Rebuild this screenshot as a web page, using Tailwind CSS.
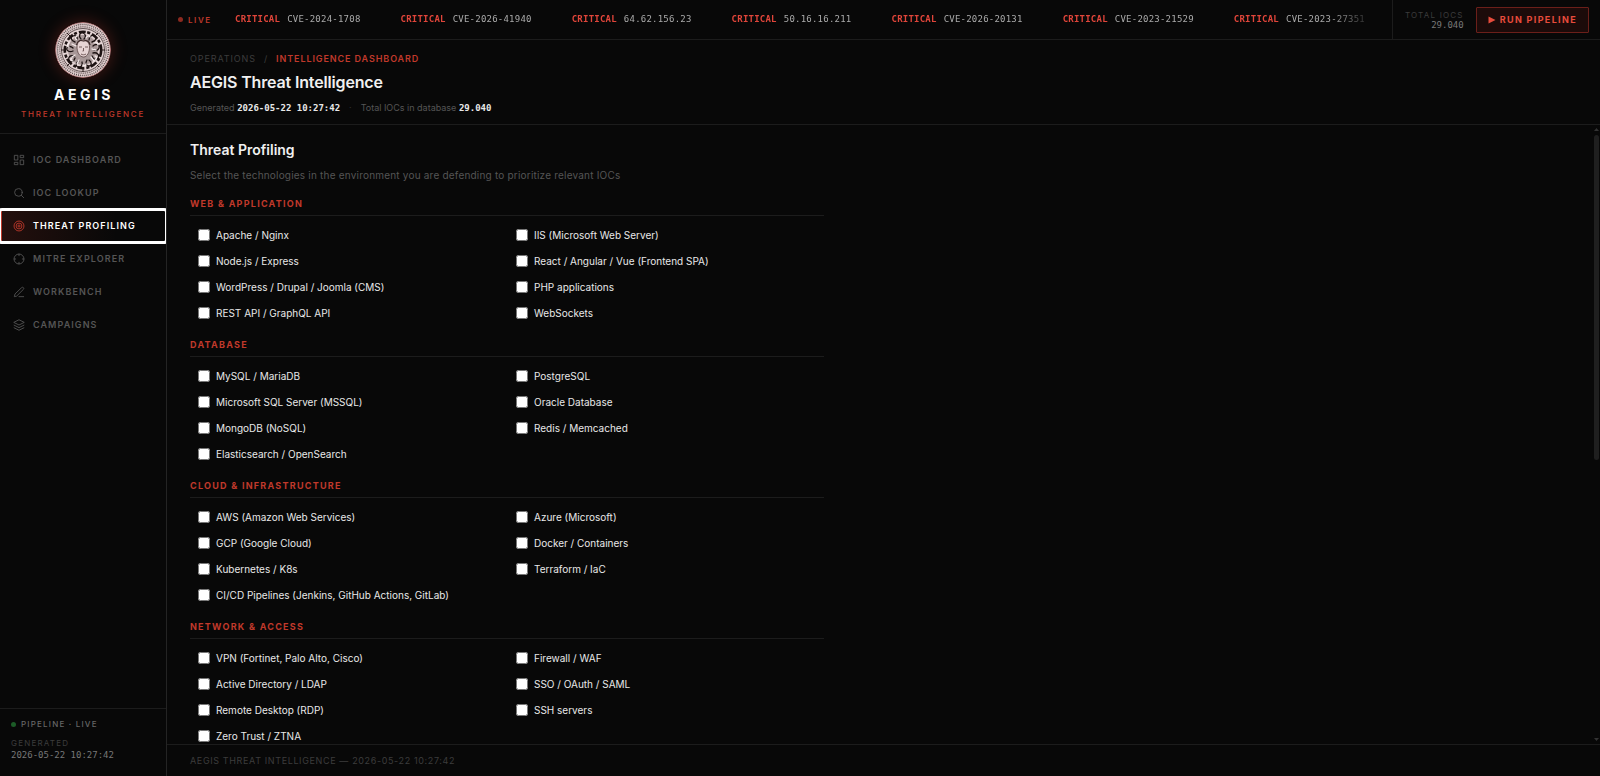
<!doctype html>
<html lang="en">
<head>
  <meta charset="UTF-8">
  <meta name="viewport" content="width=device-width, initial-scale=1.0">
  <title>AEGIS Threat Intelligence</title>
  <script src="https://cdn.jsdelivr.net/npm/@tailwindcss/browser@4"></script>
</head>
<body class="flex h-screen overflow-hidden bg-[#080808] font-['Inter',sans-serif] text-[#e8e8e8]">

<!-- Sidebar -->
<aside class="flex w-[167px] shrink-0 flex-col border-r border-[#242424]">
    <div class="flex flex-col items-center border-b border-[#1c1c1c] pt-[22px] pb-[13px]">
        <svg class="size-14 rounded-full shadow-[0_0_16px_1px_rgba(192,57,43,0.3)]" viewBox="0 0 56 56" fill="none" role="img" aria-label="Aegis shield">
            <circle cx="28" cy="28" r="27.5" fill="#e3d3d3" stroke="#a86a6a"/>
            <circle cx="28" cy="28" r="25.5" stroke="#5a4a4a" stroke-width="1.5" stroke-dasharray="1 1"/>
            <circle cx="28" cy="28" r="23.2" stroke="#8d7d7d" stroke-width="1.6" stroke-dasharray="1.5 .7"/>
            <circle cx="28" cy="28" r="21.5" stroke="#2b1e1e" stroke-width=".7"/>
            <circle cx="28" cy="28" r="18.2" stroke="#1c1212" stroke-width="2.6" stroke-dasharray="7 1.5 3 2"/>
            <circle cx="28" cy="28" r="15" fill="#a89898"/>
            <g stroke="#1c1212" stroke-width="1.3" stroke-linecap="round">
                <path d="M20 20c-4-1-5-5-2-6s5 1 4 4M26 17c-3-3-1-7 2-6s3 4 1 6M34 18c0-4 4-6 6-4s1 5-3 6M38 24c3-3 7-1 6 2s-4 3-6 1M38 31c4-1 7 2 5 5s-5 1-6-2M34 38c3 2 3 6 0 6s-4-3-2-6M27 40c1 3-1 6-4 5s-2-5 1-6M20 36c-1 4-5 5-6 2s1-5 5-4M18 29c-4 2-7-1-6-3s4-2 6 0"/>
            </g>
            <g stroke="#f4eaea" stroke-width="1.3" stroke-linecap="round">
                <path d="M22 18c-2-1-2-3 0-4M31 16c1-2 3-3 4-1M39 21c2-1 4 0 4 2M40 34c2 0 2 3 0 4M31 42c0 2-2 2-3 1M18 39c-2 0-3-2-1-3M14 25c-2 0-2-3 0-4M20 33l-3 2M36 35l3 4M21 24l-4-2M37 27l4 1M24 38l-2 4"/>
            </g>
            <path d="M22 25c0-5 3-7 6.500-7s6 3 6 7c0 5-2 10-6 10s-6.500-5-6.500-10z" fill="#e6d4d4" stroke="#5a4444" stroke-width=".8"/>
            <path d="M21.500 23c1-5 4-5 7-4 3-1 6 0 6.500 4" stroke="#3a2828" stroke-width="1.200"/>
            <path d="M24 25h3M30 25h3M28.500 26v3h-1M26 32c1.500 1 3.500 1 5 0" stroke="#6a5050" stroke-width=".9"/>
            <path d="M28 45v5M10 28h-4M46 28h4M14 42l-2 2M42 43l2 2M15 14l-3-3M41 13l2-2" stroke="#2b1e1e"/>
        </svg>
        <div class="mt-2 pl-[2px] text-[14px] leading-[18px] font-bold tracking-[0.25em] text-white">AEGIS</div>
        <div class="mt-1 text-[8px] leading-[12px] font-medium tracking-[0.22em] whitespace-nowrap text-[#c0392b]">THREAT INTELLIGENCE</div>
    </div>

    <nav class="flex flex-1 flex-col gap-px overflow-hidden pt-[10px] text-[9px] font-semibold tracking-[0.12em] text-[#555]">
        <a href="#dashboard" class="flex h-8 shrink-0 items-center gap-[7px] border-l-2 border-transparent px-[10px]">
            <svg class="size-[14px]" viewBox="0 0 24 24" fill="none" stroke="currentColor" stroke-width="1.500"><path d="M4 4h6v8H4zM14 4h6v4h-6zM14 12h6v8h-6zM4 16h6v4H4z"/></svg>
            IOC DASHBOARD
        </a>
        <a href="#lookup" class="flex h-8 shrink-0 items-center gap-[7px] border-l-2 border-transparent px-[10px]">
            <svg class="size-[14px]" viewBox="0 0 24 24" fill="none" stroke="currentColor" stroke-width="1.500" stroke-linecap="round"><circle cx="11" cy="11" r="6.500"/><path d="m20 20-4-4"/></svg>
            IOC LOOKUP
        </a>
        <a href="#profiling" aria-current="page" class="flex h-8 shrink-0 items-center gap-[7px] rounded-[2px] border-l-2 border-[#c0392b] bg-linear-to-r from-[#c0392b]/15 to-transparent to-70% px-[10px] text-white outline-3 -outline-offset-1 outline-white">
            <svg class="size-[14px] text-[#c0392b]" viewBox="0 0 24 24" fill="none" stroke="currentColor" stroke-width="1.500"><circle cx="12" cy="12" r="8.500"/><circle cx="12" cy="12" r="5"/><circle cx="12" cy="12" r="1.800"/></svg>
            THREAT PROFILING
        </a>
        <a href="#mitre" class="flex h-8 shrink-0 items-center gap-[7px] border-l-2 border-transparent px-[10px]">
            <svg class="size-[14px]" viewBox="0 0 24 24" fill="none" stroke="currentColor" stroke-width="1.500"><circle cx="12" cy="12" r="8.500"/><path d="M12 3v4M12 17v4M3 12h4M17 12h4"/></svg>
            MITRE EXPLORER
        </a>
        <a href="#workbench" class="flex h-8 shrink-0 items-center gap-[7px] border-l-2 border-transparent px-[10px]">
            <svg class="size-[14px]" viewBox="0 0 24 24" fill="none" stroke="currentColor" stroke-width="1.500" stroke-linecap="round" stroke-linejoin="round"><path d="M12 20h8M16.500 4.500a2 2 0 0 1 3 3L8 19l-4 1 1-4z"/></svg>
            WORKBENCH
        </a>
        <a href="#campaigns" class="flex h-8 shrink-0 items-center gap-[7px] border-l-2 border-transparent px-[10px]">
            <svg class="size-[14px]" viewBox="0 0 24 24" fill="none" stroke="currentColor" stroke-width="1.500" stroke-linejoin="round"><path d="M12 3 3 7.500l9 4.500 9-4.500zM3 16.500l9 4.500 9-4.500M3 12l9 4.500 9-4.500"/></svg>
            CAMPAIGNS
        </a>
    </nav>

    <div class="border-t border-[#1c1c1c] px-[11px] pt-[9px] pb-[15px]">
        <div class="flex items-center gap-[5px] text-[8px] leading-[12px] font-medium tracking-[0.15em] text-[#666]">
            <span class="size-[5px] rounded-full bg-[#1c5c27]"></span>PIPELINE · LIVE
        </div>
        <div class="mt-[7px] text-[8px] leading-[12px] tracking-[0.15em] text-[#3c3c3c]">GENERATED</div>
        <div class="font-['DejaVu_Sans_Mono',monospace] text-[9px] leading-[12px] text-[#777]">2026-05-22 10:27:42</div>
    </div>
</aside>

<div class="flex min-w-0 flex-1 flex-col">
    <!-- Live ticker -->
    <div class="flex h-10 shrink-0 items-center border-b border-[#1c1c1c]">
        <div class="flex w-[63px] shrink-0 items-center gap-[5px] pl-[11px] text-[8px] font-semibold tracking-[0.2em] text-[#c0392b]">
            <span class="size-[5px] rounded-full bg-[#8c2a20]"></span>LIVE
        </div>
        <div id="ticker" class="mr-4 flex min-w-0 flex-1 gap-10 overflow-hidden pl-[5px] font-['DejaVu_Sans_Mono',monospace] text-[9px] tracking-wide [mask-image:linear-gradient(to_right,black_96%,transparent)]"></div>
        <div class="flex h-full shrink-0 items-center gap-3 border-l border-[#1c1c1c] pr-[11px] pl-3">
            <div class="text-right">
                <div class="text-[8px] leading-[10px] tracking-[0.15em] text-[#3c3c3c]">TOTAL IOCS</div>
                <div class="font-['DejaVu_Sans_Mono',monospace] text-[9px] leading-[10px] text-[#777]">29.040</div>
            </div>
            <button type="button" class="flex h-[26px] items-center gap-1 rounded-[1px] border border-[#6b1f1a] bg-[#1c0b0a] px-[11px] text-[9px] font-bold tracking-[0.15em] text-[#e74c3c]">
                <svg class="size-[8px]" viewBox="0 0 8 8" fill="currentColor"><path d="M.5.5l7 3.500-7 3.500z"/></svg>RUN PIPELINE
            </button>
        </div>
    </div>

    <!-- Page header -->
    <header class="shrink-0 border-b border-[#1c1c1c] px-[23px] pt-3 pb-[9px]">
        <div class="flex gap-2 text-[9px] leading-[14px] tracking-[0.1em] text-[#3c3c3c]">
            <span>OPERATIONS</span><span>/</span><span class="font-semibold text-[#c0392b]">INTELLIGENCE DASHBOARD</span>
        </div>
        <h1 class="mt-[5px] text-[16px] leading-[22px] font-semibold tracking-[-0.01em] text-[#f0f0f0]">AEGIS Threat Intelligence</h1>
        <div class="mt-2 flex gap-[9px] text-[9px] leading-[14px] text-[#555]">
            <span>Generated <b class="font-['DejaVu_Sans_Mono',monospace] text-[#e8e8e8]">2026-05-22 10:27:42</b></span>
            <span class="text-[#333]">·</span>
            <span>Total IOCs in database <b class="font-['DejaVu_Sans_Mono',monospace] text-[#e8e8e8]">29.040</b></span>
        </div>
    </header>

    <!-- Threat profiling form -->
    <div class="relative flex min-h-0 flex-1 flex-col">
        <main class="min-h-0 flex-1 overflow-y-auto px-[23px] pt-[15px] [scrollbar-width:none]">
            <h2 class="text-[14px] leading-[20px] font-semibold text-[#f0f0f0]">Threat Profiling</h2>
            <p class="mt-[7px] text-[10px] leading-[16px] tracking-[0.02em] text-[#555]">Select the technologies in the environment you are defending to prioritize relevant IOCs</p>
            <form id="groups" class="mt-[14px] max-w-[634px]"></form>
        </main>
        <div class="absolute inset-y-0 right-0 flex w-[7px] flex-col items-center py-[3px]" aria-hidden="true">
            <svg class="h-[3px] w-[5px] shrink-0" viewBox="0 0 5 3" fill="#333"><path d="M0 3 2.500 0 5 3z"/></svg>
            <div class="mt-1 h-[53%] w-[5px] rounded-full bg-[#1f1f1f]"></div>
            <svg class="mt-auto h-[3px] w-[5px] shrink-0" viewBox="0 0 5 3" fill="#333"><path d="M0 0h5L2.500 3z"/></svg>
        </div>
    </div>

    <footer class="flex h-8 shrink-0 items-center border-t border-[#1c1c1c] px-[23px] text-[9px] tracking-[0.07em] text-[#3c3c3c]">
        AEGIS THREAT INTELLIGENCE — 2026-05-22 10:27:42
    </footer>
</div>

</body>

<script>
    const tickerItems = [
        "CVE-2024-1708", "CVE-2026-41940", "64.62.156.23", "50.16.16.211",
        "CVE-2026-20131", "CVE-2023-21529", "CVE-2023-27351",
    ];

    const groups = [
        ["WEB & APPLICATION", [
            "Apache / Nginx", "IIS (Microsoft Web Server)",
            "Node.js / Express", "React / Angular / Vue (Frontend SPA)",
            "WordPress / Drupal / Joomla (CMS)", "PHP applications",
            "REST API / GraphQL API", "WebSockets",
        ]],
        ["DATABASE", [
            "MySQL / MariaDB", "PostgreSQL",
            "Microsoft SQL Server (MSSQL)", "Oracle Database",
            "MongoDB (NoSQL)", "Redis / Memcached",
            "Elasticsearch / OpenSearch",
        ]],
        ["CLOUD & INFRASTRUCTURE", [
            "AWS (Amazon Web Services)", "Azure (Microsoft)",
            "GCP (Google Cloud)", "Docker / Containers",
            "Kubernetes / K8s", "Terraform / IaC",
            "CI/CD Pipelines (Jenkins, GitHub Actions, GitLab)",
        ]],
        ["NETWORK & ACCESS", [
            "VPN (Fortinet, Palo Alto, Cisco)", "Firewall / WAF",
            "Active Directory / LDAP", "SSO / OAuth / SAML",
            "Remote Desktop (RDP)", "SSH servers",
            "Zero Trust / ZTNA",
        ]],
    ];

    document.getElementById("ticker").innerHTML = tickerItems.map(item => `
        <span class="flex shrink-0 gap-[7px]">
            <b class="text-[#e0453a]">CRITICAL</b>
            <span class="text-[#aaa]">${item}</span>
        </span>
    `).join("");

    document.getElementById("groups").innerHTML = groups.map(([title, items]) => `
        <fieldset class="mb-[13px]">
            <legend class="w-full border-b border-[#1c1c1c] pb-1 text-[9px] leading-[14px] font-bold tracking-[0.14em] text-[#c0392b]">${title.replace("&", "&amp;")}</legend>
            <div class="grid grid-cols-2 gap-[2px] pt-[7px]">
                ${items.map(item => `
                    <label class="flex h-6 items-center gap-[6px] px-2 text-[10px] text-[#e8e8e8]">
                        <input type="checkbox" class="size-3">${item}
                    </label>
                `).join("")}
            </div>
        </fieldset>
    `).join("");
</script>
</html>
